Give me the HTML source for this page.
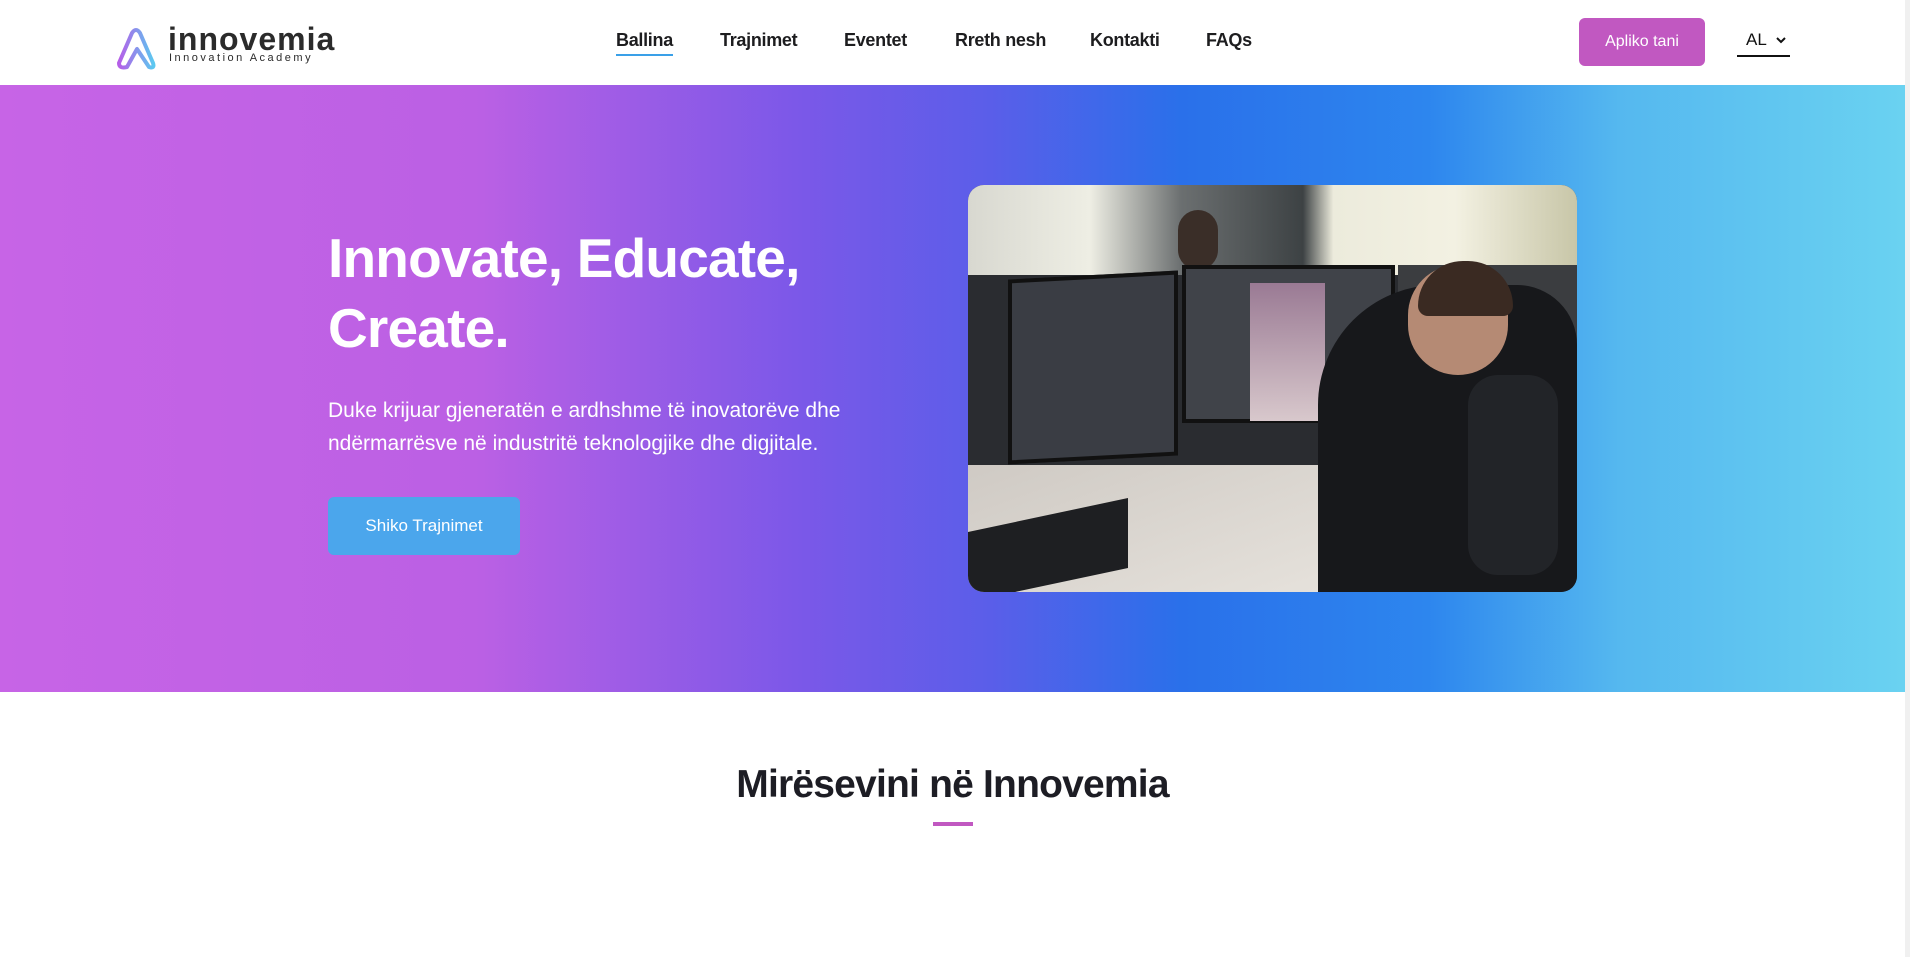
<!DOCTYPE html>
<html><head><meta charset="utf-8"><style>
*{margin:0;padding:0;box-sizing:border-box}
body{width:1910px;height:957px;overflow:hidden;background:#fff;font-family:"Liberation Sans",sans-serif;position:relative}
.hdr{position:absolute;left:0;top:0;width:1905px;height:85px;background:#fff}
.nav a{position:absolute;top:30px;font-size:18px;font-weight:bold;color:#1d1d1f;text-decoration:none;letter-spacing:-0.3px}
.hero{position:absolute;left:0;top:85px;width:1905px;height:607px;background:linear-gradient(90deg,#c764e6 0%,#bb60e4 25%,#7b58e8 42%,#5a5ee9 52%,#2a70ea 62%,#2d86ee 75%,#55b8ef 85%,#6ad2f1 100%)}
.sb{position:absolute;right:0;top:0;width:5px;height:957px;background:#f0f0f0}
</style></head><body>
<div class="hdr">
  <svg style="position:absolute;left:113px;top:25px" width="48" height="46" viewBox="0 0 48 46">
    <defs><linearGradient id="lg" x1="0" x2="1"><stop offset="0" stop-color="#b55ee8"/><stop offset="1" stop-color="#5cc8f0"/></linearGradient></defs>
    <path d="M6 38 L19 8 Q23 2 27 8 L40 38 Q42 44 36 42 L24 24 L14 42 Q6 44 6 38 Z" fill="none" stroke="url(#lg)" stroke-width="4" stroke-linejoin="round"/>
  </svg>
  <div style="position:absolute;left:168px;top:21px;font-size:32px;font-weight:bold;color:#2b2b2b;letter-spacing:1px">innovemia</div>
  <div style="position:absolute;left:169px;top:52px;font-size:11px;color:#2b2b2b;letter-spacing:2.5px">Innovation Academy</div>
  <div class="nav">
    <a style="left:616px">Ballina</a>
    <div style="position:absolute;left:616px;top:54px;width:57px;height:2px;background:#3aa0e8"></div>
    <a style="left:720px">Trajnimet</a>
    <a style="left:844px">Eventet</a>
    <a style="left:955px">Rreth nesh</a>
    <a style="left:1090px">Kontakti</a>
    <a style="left:1206px">FAQs</a>
  </div>
  <div style="position:absolute;left:1579px;top:18px;width:126px;height:48px;background:#c158c1;border-radius:6px;color:#fff;font-size:16px;text-align:center;line-height:48px">Apliko tani</div>
  <div style="position:absolute;left:1746px;top:30px;font-size:17px;color:#111">AL</div>
  <svg style="position:absolute;left:1776px;top:37px" width="10" height="7" viewBox="0 0 10 7"><path d="M1 1 L5 5 L9 1" fill="none" stroke="#111" stroke-width="2"/></svg>
  <div style="position:absolute;left:1737px;top:55px;width:53px;height:1.5px;background:#111"></div>
</div>
<div class="hero">
  <div style="position:absolute;left:328px;top:138px;font-size:55px;font-weight:bold;color:#fff;line-height:70px;letter-spacing:-0.8px">Innovate, Educate,<br>Create.</div>
  <div style="position:absolute;left:328px;top:309px;font-size:21px;color:#fff;line-height:33px">Duke krijuar gjeneratën e ardhshme të inovatorëve dhe<br>ndërmarrësve në industritë teknologjike dhe digjitale.</div>
  <div style="position:absolute;left:328px;top:412px;width:192px;height:58px;background:#4ba6ec;border-radius:6px;color:#fff;font-size:17px;text-align:center;line-height:58px">Shiko Trajnimet</div>
  <div style="position:absolute;left:968px;top:100px;width:609px;height:407px;border-radius:16px;overflow:hidden;background:#2a2c30">
    <div style="position:absolute;left:0;top:0;width:609px;height:90px;background:linear-gradient(90deg,#d8d8d0 0%,#eeeee4 20%,#6b6f70 35%,#3d4244 55%,#ecebdc 60%,#f3f1e2 80%,#c8c6a8 100%)"></div>
    <div style="position:absolute;left:210px;top:25px;width:40px;height:60px;border-radius:20px;background:#3a2e28"></div>
    <div style="position:absolute;left:40px;top:90px;width:170px;height:185px;background:#3a3d44;border:4px solid #111;transform:skewY(-3deg)"></div>
    <div style="position:absolute;left:214px;top:80px;width:213px;height:158px;background:#404349;border:4px solid #111"></div>
    <div style="position:absolute;left:282px;top:98px;width:75px;height:138px;background:linear-gradient(#9a7a94,#d8c8cc)"></div>
    <div style="position:absolute;left:430px;top:80px;width:179px;height:135px;background:#3b3d40"></div>
    <div style="position:absolute;left:0;top:280px;width:440px;height:127px;background:linear-gradient(160deg,#cfcac4,#e8e4de)"></div>
    <div style="position:absolute;left:0;top:330px;width:160px;height:70px;background:#1e1f22;transform:skewY(-12deg)"></div>
    <div style="position:absolute;left:350px;top:100px;width:259px;height:307px;background:#17181b;border-radius:120px 60px 0 0"></div>
    <div style="position:absolute;left:440px;top:80px;width:100px;height:110px;border-radius:50px;background:#b58a74"></div>
    <div style="position:absolute;left:450px;top:76px;width:95px;height:55px;border-radius:45px 45px 10px 10px;background:#3a2a22"></div>
    <div style="position:absolute;left:500px;top:190px;width:90px;height:200px;background:#222428;border-radius:30px"></div>
  </div>
</div>
<div style="position:absolute;left:0;top:763px;width:1905px;text-align:center;font-size:39px;font-weight:bold;color:#1d1d24;letter-spacing:-0.8px">Mirësevini në Innovemia</div>
<div style="position:absolute;left:933px;top:822px;width:40px;height:4px;background:#c158c1"></div>
<div class="sb"></div>
</body></html>
